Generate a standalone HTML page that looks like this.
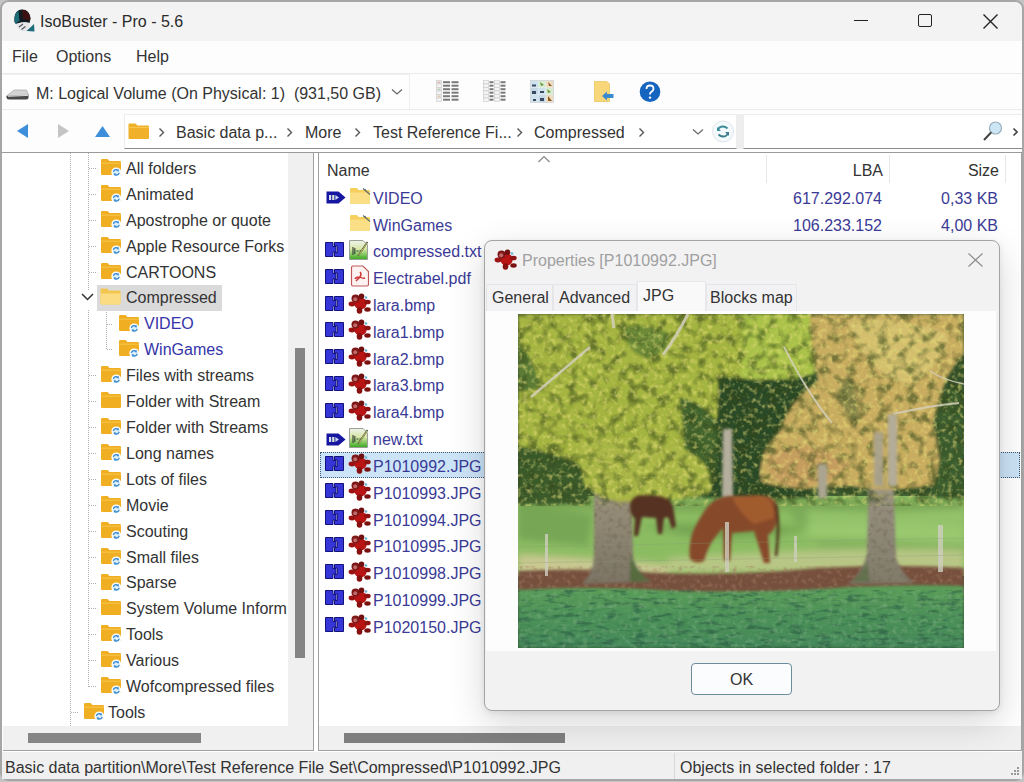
<!DOCTYPE html>
<html><head><meta charset="utf-8">
<style>
*{box-sizing:border-box}
html,body{margin:0;padding:0}
body{width:1024px;height:782px;overflow:hidden;position:relative;background:#c4c4c4;font-family:"Liberation Sans",sans-serif;font-size:16px;color:#333}
.a{position:absolute;white-space:pre}
#win{position:absolute;left:0;top:0;width:1024px;height:781px;border:2px solid #a6a6a6;border-radius:9px;background:#f0f0f0;overflow:hidden}
.t{position:absolute;white-space:pre;line-height:16px;height:16px}
.blue{color:#3a3a96}
.tb{color:#3434a8}
</style></head><body>
<div id="win"></div>
<svg width="0" height="0" style="position:absolute">
<defs>
<symbol id="fold" viewBox="0 0 22 19">
<path d="M1 2.2Q1 1 2.2 1H7.6L9.4 3H19.8Q21 3 21 4.2V15.8Q21 17 19.8 17H2.2Q1 17 1 15.8Z" fill="#f0ae22"/>
<path d="M1 5.2H21" stroke="#f5c348" stroke-width="1.2"/>
</symbol>
<symbol id="badge" viewBox="0 0 22 19">
<circle cx="16.3" cy="14.3" r="4.9" fill="#fff"/>
<circle cx="16.3" cy="14.3" r="3.7" fill="#ddf0fa"/>
<path d="M13.4 13.8Q14 11.4 16.6 11.6L18 12.3M19.2 14.8Q18.6 17.2 16 17L14.6 16.3" fill="none" stroke="#3a8ad0" stroke-width="1.3"/>
<path d="M18.6 10.8L18.8 13.4L16.4 13Z" fill="#3a8ad0"/><path d="M14 17.8L13.8 15.2L16.2 15.6Z" fill="#3a8ad0"/>
</symbol>
<symbol id="fopen" viewBox="0 0 21 17">
<path d="M0.5 1.8Q0.5 0.5 1.8 0.5H7L8.8 2.5H19.2Q20.5 2.5 20.5 3.8V15.2Q20.5 16.5 19.2 16.5H1.8Q0.5 16.5 0.5 15.2Z" fill="#f3c64e"/>
<path d="M0.5 5.5H20.5V15.2Q20.5 16.5 19.2 16.5H1.8Q0.5 16.5 0.5 15.2Z" fill="#fbdc82"/>
</symbol>
<symbol id="tag" viewBox="0 0 20 13">
<path d="M0.5 0.5H12.5L19.5 6.5L12.5 12.5H0.5Z" fill="#1616a0"/>
<rect x="3" y="4" width="2.2" height="5" fill="#d8d8f0"/><rect x="6.2" y="4" width="2.2" height="5" fill="#d8e8d0"/><path d="M9.4 4V9L13 6.5Z" fill="#c8d8f0"/>
</symbol>
<symbol id="split" viewBox="0 0 20 15">
<path d="M0.5 0.5H8V4.5H11V10H8V14.5H0.5Z" fill="#3535d8" stroke="#12127a" stroke-width="1"/>
<path d="M9.5 0.5H18.5V14.5H9.5V10.5H12.3V4H9.5Z" fill="#3535d8" stroke="#12127a" stroke-width="1"/>
</symbol>
<symbol id="flink" viewBox="0 0 22 18">
<path d="M1 2.2Q1 1 2.2 1H7.8L9.6 3H19.8Q21 3 21 4.2V15.8Q21 17 19.8 17H2.2Q1 17 1 15.8Z" fill="#f6cf5c"/>
<path d="M1 5.5H21V15.8Q21 17 19.8 17H2.2Q1 17 1 15.8Z" fill="#fadf86"/>
<path d="M14 1.5L21 7.5M16 2L17 4.5" stroke="#5a6a70" stroke-width="1.1"/>
</symbol>
<symbol id="txt" viewBox="0 0 22 22">
<defs><linearGradient id="gtx" x1="0" y1="0" x2="0" y2="1"><stop offset="0" stop-color="#eef2ea"/><stop offset="0.45" stop-color="#d8e6a8"/><stop offset="1" stop-color="#36a81e"/></linearGradient></defs>
<path d="M1.5 1.5H15L19.5 6V20.5H1.5Z" fill="url(#gtx)" stroke="#9aa098" stroke-width="1"/>
<path d="M5 8V16M6.8 9V15M8.5 12H10.5M11.5 12H13" stroke="#3a4a3a" stroke-width="1.2"/>
<path d="M10 17L19.5 3" stroke="#4a5a40" stroke-width="1.6"/><path d="M10.5 16.5L19 4" stroke="#e0d060" stroke-width="0.8"/>
</symbol>
<symbol id="pdf" viewBox="0 0 20 22">
<path d="M2 1H13L18.5 6.5V19.5Q18.5 21 17 21H3Q1.5 21 1.5 19.5V2.5Q1.5 1 3 1Z" fill="#fdf2f2" stroke="#c05a5a" stroke-width="1.2"/>
<path d="M10 7Q12 9 10 12Q7 15 6 16M10 12Q13 14 15 13M9.5 12Q6 12 5 14" fill="none" stroke="#d03838" stroke-width="1.5"/>
</symbol>
<symbol id="bear" viewBox="0 0 24 23">
<ellipse cx="12.5" cy="11.5" rx="6.2" ry="6" fill="#b81414"/>
<ellipse cx="4" cy="12" rx="3.4" ry="2.4" fill="#9a1212"/>
<ellipse cx="19.5" cy="10" rx="3.2" ry="2.3" fill="#8e1212"/>
<ellipse cx="11.5" cy="18.5" rx="2.8" ry="3.2" fill="#861010"/>
<ellipse cx="19.5" cy="17.5" rx="3.2" ry="2.2" fill="#7a1010"/>
<circle cx="7.5" cy="6.5" r="4" fill="#7e1818"/>
<circle cx="7.2" cy="7.2" r="2" fill="#c06a6a"/>
<circle cx="13.5" cy="4.2" r="2.8" fill="#701010"/>
<circle cx="18" cy="5.5" r="1.3" fill="#6ab4d4"/>
</symbol>
</defs></svg>

<!-- title bar -->
<div class="a" style="left:2px;top:2px;width:1020px;height:39px;background:#f3f3f3;border-radius:7px 7px 0 0"></div>
<div class="t" style="left:40px;top:13.5px;color:#2a2a2a">IsoBuster - Pro - 5.6</div>
<!-- window controls -->
<div class="a" style="left:854px;top:20px;width:14px;height:1.3px;background:#222"></div>
<div class="a" style="left:918px;top:14px;width:14px;height:13px;border:1.6px solid #222;border-radius:2px"></div>
<svg class="a" style="left:983px;top:14px" width="15" height="15" viewBox="0 0 15 15"><path d="M0.5 0.5L14.5 14.5M14.5 0.5L0.5 14.5" stroke="#222" stroke-width="1.4"/></svg>
<!-- menu bar -->
<div class="a" style="left:2px;top:41px;width:1020px;height:33px;background:#fdfdfd;border-bottom:1px solid #ebebeb"></div>
<div class="t" style="left:12px;top:49px">File</div>
<div class="t" style="left:56px;top:49px">Options</div>
<div class="t" style="left:136px;top:49px">Help</div>
<!-- toolbar row -->
<div class="a" style="left:2px;top:74px;width:1020px;height:40px;background:#fdfdfd"></div>
<div class="a" style="left:3px;top:74px;width:407px;height:36px;border:1px solid #efefef;border-left:none;background:#fefefe"></div>
<div class="t" style="left:36px;top:86px">M: Logical Volume (On Physical: 1)  (931,50 GB)</div>
<!-- nav row -->
<div class="a" style="left:2px;top:109px;width:1020px;height:44px;background:#fdfdfd;border-top:1px solid #ececec"></div>
<div class="a" style="left:124px;top:114px;width:613px;height:35px;background:#fff;border:1px solid #ededed;border-bottom:1.5px solid #8a8a8a"></div>
<div class="a" style="left:743px;top:114px;width:279px;height:35px;background:#fff;border:1px solid #ededed;border-bottom:1.5px solid #8a8a8a;border-right:none"></div>
<div class="a" style="left:737px;top:114px;width:6px;height:35px;background:#eeeeee"></div>
<div class="t" style="left:176px;top:125px">Basic data p...</div>
<div class="t" style="left:305px;top:125px">More</div>
<div class="t" style="left:373px;top:125px">Test Reference Fi...</div>
<div class="t" style="left:534px;top:125px">Compressed</div>
<!-- panes -->
<div class="a" style="left:2px;top:152px;width:1020px;height:600px;background:#fff;border-top:1px solid #9a9a9a"></div>
<div class="a" style="left:3px;top:153px;width:311px;height:598px;background:#fff;border-right:1px solid #a0a0a0;border-bottom:1px solid #a0a0a0"></div>
<div class="a" style="left:318px;top:153px;width:704px;height:598px;background:#fff;border-left:1px solid #a0a0a0;border-right:1px solid #a0a0a0;border-bottom:1px solid #a0a0a0"></div>
<!-- status bar -->
<div class="a" style="left:2px;top:752px;width:1020px;height:27px;background:#f0f0f0"></div>
<div class="t" style="left:5px;top:760px">Basic data partition\More\Test Reference File Set\Compressed\P1010992.JPG</div>
<div class="t" style="left:680px;top:760px">Objects in selected folder : 17</div>

<!-- title icon -->
<svg class="a" style="left:13px;top:8px" width="24" height="25" viewBox="0 0 24 25">
<path d="M1.5 14Q0.5 2 9 1.5Q17 1.5 17.5 11L16.5 15Q10 13 3 16Z" fill="#0f1c22"/>
<path d="M1.5 14Q1 5 5.5 2.8L6.5 13Q4 14 3 16Z" fill="#1d6a78"/>
<path d="M9 1.8Q16 2 17.5 10L16.5 13Q13 11 10 11Z" fill="#3c1212"/>
<path d="M3 16Q10 13 16.5 15L16 22Q12 24 8 23Q4 21 3 16Z" fill="#e6e6ea"/>
<path d="M6 19L10 16M8.5 21.5L12.5 18.5" stroke="#50585e" stroke-width="1.2"/>
<path d="M13.5 23L21 16L21.5 23.5Z" fill="#1d6e7a"/>
</svg>
<!-- drive icon -->
<svg class="a" style="left:5px;top:87px" width="25" height="16" viewBox="0 0 25 16">
<path d="M1.5 9L9 3H21.5L23.5 8Z" fill="#d4d4d4" stroke="#a8a8a8" stroke-width="0.7"/>
<path d="M1.5 9L23.5 8V10.5Q23.5 12.5 21.5 12.5H4Q1.5 12.5 1.5 10.5Z" fill="#4a4a4a"/>
<path d="M3 9.3L23 8.4" stroke="#eeeeee" stroke-width="0.9"/>
</svg>
<svg class="a" style="left:391px;top:88px" width="12" height="8" viewBox="0 0 12 8"><path d="M1 1.5L6 6L11 1.5" fill="none" stroke="#6a6a6a" stroke-width="1.3"/></svg>
<!-- toolbar icons -->
<svg class="a" style="left:436px;top:80px" width="24" height="23" viewBox="0 0 24 23">
<g fill="#f4f4f4" stroke="#c8c8c8" stroke-width="0.6"><rect x="0.5" y="0.5" width="5" height="3.4"/><rect x="0.5" y="4" width="5" height="3.4"/><rect x="0.5" y="7.5" width="5" height="3.4"/><rect x="0.5" y="11" width="5" height="3.4"/><rect x="0.5" y="14.5" width="5" height="3.4"/><rect x="0.5" y="18" width="5" height="3.4"/></g>
<g fill="#e8b0b0"><rect x="1.5" y="1.5" width="3" height="1.4"/><rect x="1.5" y="8.5" width="3" height="1.4" fill="#b0d0b0"/><rect x="1.5" y="15.5" width="3" height="1.4" fill="#e0c8a0"/></g>
<g fill="#7a7a7a"><rect x="7" y="1.2" width="7" height="2"/><rect x="15.5" y="1.2" width="7" height="2"/><rect x="7" y="4.7" width="7" height="2"/><rect x="15.5" y="4.7" width="7" height="2"/><rect x="7" y="8.2" width="7" height="2"/><rect x="15.5" y="8.2" width="7" height="2"/><rect x="7" y="11.7" width="7" height="2"/><rect x="15.5" y="11.7" width="7" height="2"/><rect x="7" y="15.2" width="7" height="2"/><rect x="15.5" y="15.2" width="7" height="2"/><rect x="7" y="18.7" width="7" height="2"/><rect x="15.5" y="18.7" width="7" height="2"/></g>
</svg>
<svg class="a" style="left:483px;top:80px" width="24" height="23" viewBox="0 0 24 23">
<g fill="#f4f4f4" stroke="#c8c8c8" stroke-width="0.6"><rect x="0.5" y="0.5" width="5" height="3.4"/><rect x="0.5" y="4" width="5" height="3.4"/><rect x="0.5" y="7.5" width="5" height="3.4"/><rect x="0.5" y="11" width="5" height="3.4"/><rect x="0.5" y="14.5" width="5" height="3.4"/><rect x="0.5" y="18" width="5" height="3.4"/><rect x="11.5" y="0.5" width="5" height="3.4"/><rect x="11.5" y="4" width="5" height="3.4"/><rect x="11.5" y="7.5" width="5" height="3.4"/><rect x="11.5" y="11" width="5" height="3.4"/><rect x="11.5" y="14.5" width="5" height="3.4"/><rect x="11.5" y="18" width="5" height="3.4"/></g>
<g fill="#7a7a7a"><rect x="6.5" y="1.2" width="4" height="2"/><rect x="17.5" y="1.2" width="5" height="2"/><rect x="6.5" y="4.7" width="4" height="2"/><rect x="17.5" y="4.7" width="5" height="2"/><rect x="6.5" y="8.2" width="4" height="2"/><rect x="17.5" y="8.2" width="5" height="2"/><rect x="6.5" y="11.7" width="4" height="2"/><rect x="17.5" y="11.7" width="5" height="2"/><rect x="6.5" y="15.2" width="4" height="2"/><rect x="17.5" y="15.2" width="5" height="2"/><rect x="6.5" y="18.7" width="4" height="2"/><rect x="17.5" y="18.7" width="5" height="2"/></g>
</svg>
<svg class="a" style="left:530px;top:80px" width="24" height="23" viewBox="0 0 24 23">
<rect x="0.5" y="0.5" width="23" height="22" fill="#e8eef2" stroke="#c0c8cc" stroke-width="0.6"/>
<rect x="1" y="1" width="7" height="6.5" fill="#cfe3ee"/><rect x="8.5" y="1" width="7" height="6.5" fill="#d8ecd0"/><rect x="16" y="1" width="7" height="6.5" fill="#f0dcc0"/>
<rect x="1" y="8" width="7" height="6.5" fill="#c4d8e8"/><rect x="8.5" y="8" width="7" height="6.5" fill="#cfe3ee"/><rect x="16" y="8" width="7" height="6.5" fill="#d8ecd0"/>
<rect x="1" y="15" width="7" height="7" fill="#cfe3ee"/><rect x="8.5" y="15" width="7" height="7" fill="#c4d8e8"/><rect x="16" y="15" width="7" height="7" fill="#f0dcc0"/>
<g fill="#3a4a60"><rect x="2" y="4.5" width="4" height="2"/><rect x="10" y="11" width="4" height="2"/><rect x="3" y="19" width="3" height="2"/><rect x="10" y="18" width="4" height="3"/><rect x="2" y="11" width="4" height="3"/></g>
<g fill="#8a5a20"><path d="M18 2L22 6H19Z"/><path d="M18 16L22 21H18Z"/></g><g fill="#6a9a40"><path d="M10 2L14 5L11 6Z"/><path d="M17 9L21 12L18 13Z"/></g>
</svg>
<svg class="a" style="left:594px;top:81px" width="21" height="22" viewBox="0 0 21 22">
<path d="M0.5 0.5H13L15.5 3V20.5H0.5Z" fill="#f7d77a" stroke="#eac660" stroke-width="0.8"/>
<path d="M8 15L13 10.5V13H19.5V17H13V19.5Z" fill="#3a8ad0"/>
</svg>
<svg class="a" style="left:639px;top:81px" width="22" height="22" viewBox="0 0 22 22">
<circle cx="11" cy="10.8" r="10.3" fill="#1565c0"/>
<path d="M7.5 8Q7.5 4.5 11 4.5Q14.5 4.5 14.5 7.8Q14.5 9.8 12.2 11Q11 11.7 11 13.5" fill="none" stroke="#fff" stroke-width="1.8"/>
<circle cx="11" cy="16.6" r="1.2" fill="#fff"/>
</svg>
<!-- nav arrows -->
<svg class="a" style="left:16px;top:123px" width="13" height="16" viewBox="0 0 13 16"><path d="M12 1V15L1 8Z" fill="#3d8fdc"/></svg>
<svg class="a" style="left:57px;top:123px" width="13" height="16" viewBox="0 0 13 16"><path d="M1 1V15L12 8Z" fill="#c4c4c4"/></svg>
<svg class="a" style="left:94px;top:125px" width="17" height="13" viewBox="0 0 17 13"><path d="M1 12H16L8.5 1Z" fill="#3d8fdc"/></svg>
<!-- address folder -->
<svg class="a" style="left:128px;top:123px" width="22" height="17" viewBox="0 0 22 17">
<path d="M0.5 1.5Q0.5 0.5 1.5 0.5H7.5L9.5 2.5H20Q21 2.5 21 3.5V15Q21 16 20 16H1.5Q0.5 16 0.5 15Z" fill="#f0b02a"/>
<path d="M0.5 4.5H21" stroke="#f7c850" stroke-width="1"/>
</svg>
<svg class="a" style="left:158px;top:127px" width="7" height="11" viewBox="0 0 7 11"><path d="M1.5 1.5L5.5 5.5L1.5 9.5" fill="none" stroke="#555" stroke-width="1.4"/></svg>
<svg class="a" style="left:286px;top:127px" width="7" height="11" viewBox="0 0 7 11"><path d="M1.5 1.5L5.5 5.5L1.5 9.5" fill="none" stroke="#555" stroke-width="1.4"/></svg>
<svg class="a" style="left:354px;top:127px" width="7" height="11" viewBox="0 0 7 11"><path d="M1.5 1.5L5.5 5.5L1.5 9.5" fill="none" stroke="#555" stroke-width="1.4"/></svg>
<svg class="a" style="left:516px;top:127px" width="7" height="11" viewBox="0 0 7 11"><path d="M1.5 1.5L5.5 5.5L1.5 9.5" fill="none" stroke="#555" stroke-width="1.4"/></svg>
<svg class="a" style="left:638px;top:127px" width="7" height="11" viewBox="0 0 7 11"><path d="M1.5 1.5L5.5 5.5L1.5 9.5" fill="none" stroke="#555" stroke-width="1.4"/></svg>
<svg class="a" style="left:692px;top:128px" width="12" height="8" viewBox="0 0 12 8"><path d="M1 1.5L6 6L11 1.5" fill="none" stroke="#6a6a6a" stroke-width="1.3"/></svg>
<!-- refresh -->
<svg class="a" style="left:711px;top:120px" width="24" height="24" viewBox="0 0 24 24">
<circle cx="12" cy="11.5" r="10.5" fill="#f4fafc" stroke="#e0e4ea" stroke-width="1"/>
<path d="M7 10Q8 6.5 12 6.5Q14.5 6.5 16.5 8.5" fill="none" stroke="#3c8c9c" stroke-width="1.8"/>
<path d="M6 7V11H10Z" fill="#3c8c9c"/>
<path d="M17 13Q16 16.5 12 16.5Q9.5 16.5 7.5 14.5" fill="none" stroke="#3c7c8c" stroke-width="1.8"/>
<path d="M18 16V12H14Z" fill="#3c7c8c"/>
</svg>
<!-- search -->
<svg class="a" style="left:981px;top:120px" width="22" height="22" viewBox="0 0 22 22">
<circle cx="14.5" cy="8" r="6" fill="#cde6f6" stroke="#9ab0c0" stroke-width="1.2"/>
<path d="M10.3 12.2L3 20" stroke="#444" stroke-width="2"/>
</svg>
<svg class="a" style="left:1012px;top:127px" width="7" height="10" viewBox="0 0 7 10"><path d="M1.5 1.5L5 5L1.5 8.5" fill="none" stroke="#444" stroke-width="1.6"/></svg>
<!-- status bar divider + grip -->
<div class="a" style="left:674px;top:753px;width:1px;height:26px;background:#d8d8d8"></div>
<svg class="a" style="left:1009px;top:766px" width="12" height="12" viewBox="0 0 12 12"><g fill="#9a9a9a"><rect x="8" y="1" width="2" height="2"/><rect x="5" y="4" width="2" height="2"/><rect x="8" y="4" width="2" height="2"/><rect x="2" y="7" width="2" height="2"/><rect x="5" y="7" width="2" height="2"/><rect x="8" y="7" width="2" height="2"/></g></svg>

<div class="a" style="left:0;top:0;width:288px;height:726px;overflow:hidden">
<div class="a" style="left:70px;top:153px;width:1px;height:573px;background:repeating-linear-gradient(#b0b0b0 0 1px,transparent 1px 2px)"></div>
<div class="a" style="left:88px;top:153px;width:1px;height:137px;background:repeating-linear-gradient(#b0b0b0 0 1px,transparent 1px 2px)"></div>
<div class="a" style="left:88px;top:310px;width:1px;height:377px;background:repeating-linear-gradient(#b0b0b0 0 1px,transparent 1px 2px)"></div>
<div class="a" style="left:106px;top:310px;width:1px;height:40px;background:repeating-linear-gradient(#b0b0b0 0 1px,transparent 1px 2px)"></div>
<div class="a" style="left:89px;top:168px;width:7px;height:1px;background:repeating-linear-gradient(90deg,#b0b0b0 0 1px,transparent 1px 2px)"></div>
<div class="a" style="left:89px;top:194px;width:7px;height:1px;background:repeating-linear-gradient(90deg,#b0b0b0 0 1px,transparent 1px 2px)"></div>
<div class="a" style="left:89px;top:220px;width:7px;height:1px;background:repeating-linear-gradient(90deg,#b0b0b0 0 1px,transparent 1px 2px)"></div>
<div class="a" style="left:89px;top:246px;width:7px;height:1px;background:repeating-linear-gradient(90deg,#b0b0b0 0 1px,transparent 1px 2px)"></div>
<div class="a" style="left:89px;top:272px;width:7px;height:1px;background:repeating-linear-gradient(90deg,#b0b0b0 0 1px,transparent 1px 2px)"></div>
<div class="a" style="left:107px;top:324px;width:6px;height:1px;background:repeating-linear-gradient(90deg,#b0b0b0 0 1px,transparent 1px 2px)"></div>
<div class="a" style="left:107px;top:349px;width:6px;height:1px;background:repeating-linear-gradient(90deg,#b0b0b0 0 1px,transparent 1px 2px)"></div>
<div class="a" style="left:89px;top:375px;width:7px;height:1px;background:repeating-linear-gradient(90deg,#b0b0b0 0 1px,transparent 1px 2px)"></div>
<div class="a" style="left:89px;top:401px;width:7px;height:1px;background:repeating-linear-gradient(90deg,#b0b0b0 0 1px,transparent 1px 2px)"></div>
<div class="a" style="left:89px;top:427px;width:7px;height:1px;background:repeating-linear-gradient(90deg,#b0b0b0 0 1px,transparent 1px 2px)"></div>
<div class="a" style="left:89px;top:453px;width:7px;height:1px;background:repeating-linear-gradient(90deg,#b0b0b0 0 1px,transparent 1px 2px)"></div>
<div class="a" style="left:89px;top:479px;width:7px;height:1px;background:repeating-linear-gradient(90deg,#b0b0b0 0 1px,transparent 1px 2px)"></div>
<div class="a" style="left:89px;top:505px;width:7px;height:1px;background:repeating-linear-gradient(90deg,#b0b0b0 0 1px,transparent 1px 2px)"></div>
<div class="a" style="left:89px;top:531px;width:7px;height:1px;background:repeating-linear-gradient(90deg,#b0b0b0 0 1px,transparent 1px 2px)"></div>
<div class="a" style="left:89px;top:557px;width:7px;height:1px;background:repeating-linear-gradient(90deg,#b0b0b0 0 1px,transparent 1px 2px)"></div>
<div class="a" style="left:89px;top:583px;width:7px;height:1px;background:repeating-linear-gradient(90deg,#b0b0b0 0 1px,transparent 1px 2px)"></div>
<div class="a" style="left:89px;top:608px;width:7px;height:1px;background:repeating-linear-gradient(90deg,#b0b0b0 0 1px,transparent 1px 2px)"></div>
<div class="a" style="left:89px;top:634px;width:7px;height:1px;background:repeating-linear-gradient(90deg,#b0b0b0 0 1px,transparent 1px 2px)"></div>
<div class="a" style="left:89px;top:660px;width:7px;height:1px;background:repeating-linear-gradient(90deg,#b0b0b0 0 1px,transparent 1px 2px)"></div>
<div class="a" style="left:89px;top:686px;width:7px;height:1px;background:repeating-linear-gradient(90deg,#b0b0b0 0 1px,transparent 1px 2px)"></div>
<div class="a" style="left:71px;top:712px;width:8px;height:1px;background:repeating-linear-gradient(90deg,#b0b0b0 0 1px,transparent 1px 2px)"></div>
<svg class="a" style="left:100px;top:158px" width="22" height="19"><use href="#fold"/><use href="#badge"/></svg>
<div class="t" style="left:126px;top:160.9px">All folders</div>
<svg class="a" style="left:100px;top:184px" width="22" height="19"><use href="#fold"/><use href="#badge"/></svg>
<div class="t" style="left:126px;top:186.8px">Animated</div>
<svg class="a" style="left:100px;top:210px" width="22" height="19"><use href="#fold"/><use href="#badge"/></svg>
<div class="t" style="left:126px;top:212.8px">Apostrophe or quote</div>
<svg class="a" style="left:100px;top:236px" width="22" height="19"><use href="#fold"/><use href="#badge"/></svg>
<div class="t" style="left:126px;top:238.6px">Apple Resource Forks</div>
<svg class="a" style="left:100px;top:262px" width="22" height="19"><use href="#fold"/><use href="#badge"/></svg>
<div class="t" style="left:126px;top:264.6px">CARTOONS</div>
<div class="a" style="left:97px;top:285px;width:125px;height:26px;background:#dadada"></div>
<svg class="a" style="left:81px;top:293px" width="13" height="8" viewBox="0 0 13 8"><path d="M1 1L6.5 6.5L12 1" fill="none" stroke="#333" stroke-width="1.5"/></svg>
<svg class="a" style="left:100px;top:288px" width="21" height="17"><use href="#fopen"/></svg>
<div class="t" style="left:126px;top:290.4px">Compressed</div>
<svg class="a" style="left:118px;top:314px" width="22" height="19"><use href="#fold"/><use href="#badge"/></svg>
<div class="t tb" style="left:144px;top:316.3px">VIDEO</div>
<svg class="a" style="left:118px;top:339px" width="22" height="19"><use href="#fold"/><use href="#badge"/></svg>
<div class="t tb" style="left:144px;top:342.2px">WinGames</div>
<svg class="a" style="left:100px;top:365px" width="22" height="19"><use href="#fold"/><use href="#badge"/></svg>
<div class="t" style="left:126px;top:368.1px">Files with streams</div>
<svg class="a" style="left:100px;top:391px" width="22" height="19"><use href="#fold"/></svg>
<div class="t" style="left:126px;top:394.1px">Folder with Stream</div>
<svg class="a" style="left:100px;top:417px" width="22" height="19"><use href="#fold"/><use href="#badge"/></svg>
<div class="t" style="left:126px;top:419.9px">Folder with Streams</div>
<svg class="a" style="left:100px;top:443px" width="22" height="19"><use href="#fold"/><use href="#badge"/></svg>
<div class="t" style="left:126px;top:445.8px">Long names</div>
<svg class="a" style="left:100px;top:469px" width="22" height="19"><use href="#fold"/><use href="#badge"/></svg>
<div class="t" style="left:126px;top:471.7px">Lots of files</div>
<svg class="a" style="left:100px;top:495px" width="22" height="19"><use href="#fold"/><use href="#badge"/></svg>
<div class="t" style="left:126px;top:497.6px">Movie</div>
<svg class="a" style="left:100px;top:521px" width="22" height="19"><use href="#fold"/><use href="#badge"/></svg>
<div class="t" style="left:126px;top:523.5px">Scouting</div>
<svg class="a" style="left:100px;top:547px" width="22" height="19"><use href="#fold"/><use href="#badge"/></svg>
<div class="t" style="left:126px;top:549.5px">Small files</div>
<svg class="a" style="left:100px;top:573px" width="22" height="19"><use href="#fold"/><use href="#badge"/></svg>
<div class="t" style="left:126px;top:575.4px">Sparse</div>
<svg class="a" style="left:100px;top:598px" width="22" height="19"><use href="#fold"/></svg>
<div class="t" style="left:126px;top:601.2px">System Volume Inform</div>
<svg class="a" style="left:100px;top:624px" width="22" height="19"><use href="#fold"/><use href="#badge"/></svg>
<div class="t" style="left:126px;top:627.2px">Tools</div>
<svg class="a" style="left:100px;top:650px" width="22" height="19"><use href="#fold"/><use href="#badge"/></svg>
<div class="t" style="left:126px;top:653.0px">Various</div>
<svg class="a" style="left:100px;top:676px" width="22" height="19"><use href="#fold"/><use href="#badge"/></svg>
<div class="t" style="left:126px;top:679.0px">Wofcompressed files</div>
<svg class="a" style="left:83px;top:702px" width="22" height="19"><use href="#fold"/><use href="#badge"/></svg>
<div class="t" style="left:108px;top:704.9px">Tools</div>
</div>
<div class="t" style="left:327px;top:163.3px">Name</div>
<svg class="a" style="left:537px;top:155px" width="14" height="8" viewBox="0 0 14 8"><path d="M1.5 7L7 1.5L12.5 7" fill="none" stroke="#8a8a8a" stroke-width="1.2"/></svg>
<div class="a" style="left:766px;top:155px;width:1px;height:28px;background:#e6e6e6"></div>
<div class="a" style="left:889px;top:155px;width:1px;height:28px;background:#e6e6e6"></div>
<div class="a" style="left:1005px;top:155px;width:1px;height:28px;background:#e6e6e6"></div>
<div class="t" style="left:783px;top:163.3px;width:100px;text-align:right">LBA</div>
<div class="t" style="left:899px;top:163.3px;width:100px;text-align:right">Size</div>
<svg class="a" style="left:326px;top:191px" width="20" height="13"><use href="#tag"/></svg>
<svg class="a" style="left:349px;top:187px" width="22" height="18"><use href="#flink"/></svg>
<div class="t blue" style="left:373px;top:190.8px">VIDEO</div>
<div class="t blue" style="left:782px;top:190.8px;width:100px;text-align:right">617.292.074</div>
<div class="t blue" style="left:898px;top:190.8px;width:100px;text-align:right">0,33 KB</div>
<svg class="a" style="left:349px;top:214px" width="22" height="18"><use href="#flink"/></svg>
<div class="t blue" style="left:373px;top:217.7px">WinGames</div>
<div class="t blue" style="left:782px;top:217.7px;width:100px;text-align:right">106.233.152</div>
<div class="t blue" style="left:898px;top:217.7px;width:100px;text-align:right">4,00 KB</div>
<svg class="a" style="left:325px;top:242px" width="20" height="15"><use href="#split"/></svg>
<svg class="a" style="left:348px;top:239px" width="22" height="22"><use href="#txt"/></svg>
<div class="t blue" style="left:373px;top:244.4px">compressed.txt</div>
<svg class="a" style="left:325px;top:269px" width="20" height="15"><use href="#split"/></svg>
<svg class="a" style="left:350px;top:265px" width="20" height="22"><use href="#pdf"/></svg>
<div class="t blue" style="left:373px;top:271.2px">Electrabel.pdf</div>
<svg class="a" style="left:325px;top:296px" width="20" height="15"><use href="#split"/></svg>
<svg class="a" style="left:348px;top:292px" width="24" height="23"><use href="#bear"/></svg>
<div class="t blue" style="left:373px;top:298.1px">lara.bmp</div>
<svg class="a" style="left:325px;top:322px" width="20" height="15"><use href="#split"/></svg>
<svg class="a" style="left:348px;top:318px" width="24" height="23"><use href="#bear"/></svg>
<div class="t blue" style="left:373px;top:324.8px">lara1.bmp</div>
<svg class="a" style="left:325px;top:349px" width="20" height="15"><use href="#split"/></svg>
<svg class="a" style="left:348px;top:345px" width="24" height="23"><use href="#bear"/></svg>
<div class="t blue" style="left:373px;top:351.7px">lara2.bmp</div>
<svg class="a" style="left:325px;top:376px" width="20" height="15"><use href="#split"/></svg>
<svg class="a" style="left:348px;top:372px" width="24" height="23"><use href="#bear"/></svg>
<div class="t blue" style="left:373px;top:378.4px">lara3.bmp</div>
<svg class="a" style="left:325px;top:403px" width="20" height="15"><use href="#split"/></svg>
<svg class="a" style="left:348px;top:399px" width="24" height="23"><use href="#bear"/></svg>
<div class="t blue" style="left:373px;top:405.2px">lara4.bmp</div>
<svg class="a" style="left:326px;top:433px" width="20" height="13"><use href="#tag"/></svg>
<svg class="a" style="left:348px;top:427px" width="22" height="22"><use href="#txt"/></svg>
<div class="t blue" style="left:373px;top:432.1px">new.txt</div>
<div class="a" style="left:320px;top:452px;width:700px;height:26px;background:#cce4f7;border:1px dotted #3c5a78"></div>
<svg class="a" style="left:325px;top:456px" width="20" height="15"><use href="#split"/></svg>
<svg class="a" style="left:348px;top:452px" width="24" height="23"><use href="#bear"/></svg>
<div class="t blue" style="left:373px;top:458.8px">P1010992.JPG</div>
<svg class="a" style="left:325px;top:483px" width="20" height="15"><use href="#split"/></svg>
<svg class="a" style="left:348px;top:479px" width="24" height="23"><use href="#bear"/></svg>
<div class="t blue" style="left:373px;top:485.7px">P1010993.JPG</div>
<svg class="a" style="left:325px;top:510px" width="20" height="15"><use href="#split"/></svg>
<svg class="a" style="left:348px;top:506px" width="24" height="23"><use href="#bear"/></svg>
<div class="t blue" style="left:373px;top:512.5px">P1010994.JPG</div>
<svg class="a" style="left:325px;top:537px" width="20" height="15"><use href="#split"/></svg>
<svg class="a" style="left:348px;top:533px" width="24" height="23"><use href="#bear"/></svg>
<div class="t blue" style="left:373px;top:539.3px">P1010995.JPG</div>
<svg class="a" style="left:325px;top:564px" width="20" height="15"><use href="#split"/></svg>
<svg class="a" style="left:348px;top:560px" width="24" height="23"><use href="#bear"/></svg>
<div class="t blue" style="left:373px;top:566.1px">P1010998.JPG</div>
<svg class="a" style="left:325px;top:590px" width="20" height="15"><use href="#split"/></svg>
<svg class="a" style="left:348px;top:586px" width="24" height="23"><use href="#bear"/></svg>
<div class="t blue" style="left:373px;top:592.9px">P1010999.JPG</div>
<svg class="a" style="left:325px;top:617px" width="20" height="15"><use href="#split"/></svg>
<svg class="a" style="left:348px;top:613px" width="24" height="23"><use href="#bear"/></svg>
<div class="t blue" style="left:373px;top:619.7px">P1020150.JPG</div>
<div class="a" style="left:288px;top:153px;width:25px;height:597px;background:#f0f0f0"></div>
<div class="a" style="left:295px;top:348px;width:10px;height:310px;background:#858585"></div>
<div class="a" style="left:3px;top:726px;width:310px;height:24px;background:#f0f0f0"></div>
<div class="a" style="left:28px;top:733px;width:173px;height:10px;background:#858585"></div>
<div class="a" style="left:319px;top:726px;width:702px;height:24px;background:#f0f0f0"></div>
<div class="a" style="left:344px;top:733px;width:221px;height:10px;background:#7f7f7f"></div>
<!-- dialog -->
<div class="a" style="left:484px;top:239.5px;width:515.5px;height:471.5px;border:1px solid #a4a4a4;border-radius:8px;background:#f2f2f3;box-shadow:0 12px 36px rgba(0,0,0,0.16),0 2px 6px rgba(0,0,0,0.08)"></div>
<svg class="a" style="left:494px;top:248px" width="24" height="23"><use href="#bear"/></svg>
<div class="t" style="left:522px;top:252.5px;color:#a0a0a0">Properties [P1010992.JPG]</div>
<svg class="a" style="left:968px;top:252.5px" width="15" height="14" viewBox="0 0 15 14"><path d="M0.5 0.5L14.5 13.5M14.5 0.5L0.5 13.5" stroke="#8c8c8c" stroke-width="1.2"/></svg>
<!-- tabs -->
<div class="a" style="left:486px;top:284px;width:67px;height:27px;background:#f2f2f4;border:1px solid #e6e6e8;border-bottom:none"></div>
<div class="a" style="left:553px;top:284px;width:84px;height:27px;background:#f2f2f4;border:1px solid #e6e6e8;border-bottom:none"></div>
<div class="a" style="left:706px;top:284px;width:91px;height:27px;background:#f2f2f4;border:1px solid #e6e6e8;border-bottom:none"></div>
<div class="a" style="left:636.5px;top:281px;width:69px;height:31px;background:#f9f9fa;border:1px solid #e8e8ea;border-bottom:none"></div>
<div class="t" style="left:492px;top:290px">General</div>
<div class="t" style="left:559px;top:290px">Advanced</div>
<div class="t" style="left:643px;top:288px">JPG</div>
<div class="t" style="left:710px;top:289.5px">Blocks map</div>
<!-- tab page -->
<div class="a" style="left:486px;top:311px;width:510px;height:340px;background:#fdfdfd"></div>
<!-- OK button -->
<div class="a" style="left:691px;top:662.5px;width:101px;height:32px;border:1px solid #6a8e9c;border-radius:4px;background:#fafcfd"></div>
<div class="t" style="left:691px;top:672px;width:101px;text-align:center">OK</div>

<svg class="a" style="left:518px;top:314px" width="446" height="334" viewBox="0 0 446 334">
<defs>
<filter id="bl1" x="-20%" y="-20%" width="140%" height="140%"><feGaussianBlur stdDeviation="1.6"/></filter>
<filter id="bl3" x="-30%" y="-30%" width="160%" height="160%"><feGaussianBlur stdDeviation="3.5"/></filter>
<filter id="mot" x="0" y="0" width="100%" height="100%">
<feTurbulence type="fractalNoise" baseFrequency="0.1" numOctaves="3" seed="7" result="n"/>
<feGaussianBlur in="n" stdDeviation="0.8" result="nb"/><feColorMatrix in="nb" type="matrix" values="0 0 0 0 0  0 0 0 0 0  0 0 0 0 0  4 0 0 0 -1.85" result="a"/>
<feComposite in="SourceGraphic" in2="a" operator="in"/>
</filter>
<filter id="mot2" x="0" y="0" width="100%" height="100%">
<feTurbulence type="fractalNoise" baseFrequency="0.2" numOctaves="2" seed="21" result="n"/>
<feGaussianBlur in="n" stdDeviation="0.6" result="nb"/><feColorMatrix in="nb" type="matrix" values="0 0 0 0 0  0 0 0 0 0  0 0 0 0 0  0 3 0 0 -1.45" result="a"/>
<feComposite in="SourceGraphic" in2="a" operator="in"/>
</filter>
<filter id="mot3" x="0" y="0" width="100%" height="100%">
<feTurbulence type="fractalNoise" baseFrequency="0.07 0.25" numOctaves="2" seed="5" result="n"/>
<feColorMatrix in="n" type="matrix" values="0 0 0 0 0  0 0 0 0 0  0 0 0 0 0  0 0 4 0 -2.0" result="a"/>
<feComposite in="SourceGraphic" in2="a" operator="in"/>
</filter>
<linearGradient id="fg" x1="0" y1="0" x2="0" y2="1"><stop offset="0" stop-color="#5c9e58"/><stop offset="0.5" stop-color="#4c9058"/><stop offset="1" stop-color="#44885a"/></linearGradient>
<linearGradient id="tr1" x1="0" y1="0" x2="0" y2="1"><stop offset="0" stop-color="#aaa48c"/><stop offset="0.35" stop-color="#958d78"/><stop offset="1" stop-color="#7c7464"/></linearGradient>
<linearGradient id="tr2" x1="0" y1="0" x2="0" y2="1"><stop offset="0" stop-color="#b0aa94"/><stop offset="0.3" stop-color="#968f7e"/><stop offset="1" stop-color="#807a6a"/></linearGradient>
<clipPath id="trc"><path d="M76 186 Q94 182 113 186 L115 244 Q120 260 134 268 L64 270 Q76 258 76 242Z"/><path d="M351 160 Q363 157 375 160 L378 244 Q384 260 396 269 L330 270 Q345 258 349 240Z"/></clipPath>
</defs>
<rect width="446" height="334" fill="#34502a"/>
<!-- field -->
<rect x="0" y="182" width="446" height="80" fill="#8cbc62"/>
<g filter="url(#bl3)">
<path d="M0 184 H446 V196 Q300 192 200 198 Q100 196 0 194Z" fill="#7aa654"/>
<path d="M120 212 Q200 206 290 214 Q260 226 180 224Z" fill="#6c9c4c" opacity="0.7"/>
<path d="M270 196 Q360 190 446 200 V214 Q360 208 280 212Z" fill="#72a452" opacity="0.6"/>
<path d="M300 226 Q380 222 446 226 V236 Q370 234 300 236Z" fill="#7aaa56" opacity="0.5"/>
<path d="M0 240 Q80 244 150 250 L150 262 L0 262Z" fill="#c8c890"/>
<path d="M150 244 Q330 232 446 236 V258 H150Z" fill="#bcc888" opacity="0.9"/>
<path d="M0 190 Q40 196 75 200 L70 232 Q30 228 0 226Z" fill="#6e9e50" opacity="0.7"/>
<path d="M290 196 Q360 200 446 196 V230 Q360 226 290 222Z" fill="#a4d078" opacity="0.6"/>
</g>
<!-- litter band -->
<path d="M0 257 Q70 253 140 259 Q220 262 300 254 Q380 250 446 254 V282 H0Z" fill="#76503e" filter="url(#bl1)"/>
<rect x="0" y="252" width="446" height="30" fill="#a07a62" filter="url(#mot2)" opacity="0.55"/>
<!-- foreground grass -->
<path d="M0 276 Q80 271 160 277 Q260 279 330 273 Q400 270 446 272 V334 H0Z" fill="url(#fg)" filter="url(#bl1)"/>
<rect x="0" y="276" width="446" height="58" fill="#2a5c44" filter="url(#mot3)" opacity="0.6"/>
<rect x="0" y="276" width="446" height="58" fill="#88b488" filter="url(#mot2)" opacity="0.4"/>
<!-- main trunks -->
<g filter="url(#bl1)">
<path d="M76 150 Q94 146 113 150 L115 244 Q120 260 134 268 L64 270 Q76 258 76 242Z" fill="url(#tr1)"/>
<path d="M112 240 Q118 258 132 267 L112 268Z" fill="#4a6a34" opacity="0.8"/>
<path d="M351 150 Q363 147 375 150 L378 244 Q384 260 396 269 L330 270 Q345 258 349 240Z" fill="url(#tr2)"/>
<path d="M333 268 Q345 258 349 246 L352 268Z" fill="#4e6a3a" opacity="0.6"/>
</g>
<!-- woods/canopy -->
<g filter="url(#bl1)">
<path d="M0 0 H300 L296 60 Q260 70 240 62 Q210 70 196 110 Q205 140 196 170 Q180 186 150 186 Q120 190 96 184 Q80 180 60 150 Q30 136 0 132Z" fill="#a4b440"/>
<path d="M0 30 Q14 40 22 72 Q10 80 0 76Z" fill="#5a7a34"/>
<path d="M105 13 Q130 8 152 20 Q150 40 130 44 Q108 40 105 13Z" fill="#5e8034" opacity="0.8"/>
<path d="M0 132 Q40 140 66 158 L72 190 H0Z" fill="#3a5a2c"/>
<path d="M200 62 Q230 66 262 64 Q292 70 296 110 Q300 150 290 184 L186 184 Q200 150 200 62Z" fill="#2c4826"/>
<path d="M161 83 Q190 90 200 110 Q204 150 190 184 L160 184 Q172 150 161 83Z" fill="#385a2c" opacity="0.9"/>
<path d="M60 128 Q110 118 160 132 Q200 150 192 178 Q150 190 110 188 Q84 188 66 170Z" fill="#a8b644"/>
<path d="M292 0 H446 V40 Q425 60 415 110 Q425 150 419 170 Q380 180 330 172 Q280 178 244 168 Q238 140 262 118 Q270 90 300 66 Q292 30 292 0Z" fill="#c8ac60"/>
<path d="M330 8 Q380 0 430 20 Q420 60 390 70 Q350 62 330 8Z" fill="#d6c472" opacity="0.8"/>
<path d="M250 140 Q290 120 330 150 Q320 172 270 172 Q246 162 250 140Z" fill="#c49c5e" opacity="0.9"/>
<path d="M330 60 Q345 90 340 110 Q325 100 318 80Z" fill="#5a6a3a" opacity="0.6"/>
<path d="M424 80 Q436 70 446 72 V184 H410 Q426 150 420 120 Q416 96 424 80Z" fill="#3a5c2e"/>
<path d="M223 0 H292 Q292 30 296 60 Q260 68 223 64Z" fill="#aac248"/>
</g>
<rect x="0" y="0" width="446" height="192" fill="#34461a" filter="url(#mot)" opacity="0.55"/>
<rect x="0" y="0" width="446" height="192" fill="#e8e07c" filter="url(#mot2)" opacity="0.55"/>
<!-- branches -->
<g stroke="#d4d0bc" fill="none" opacity="0.85">
<path d="M13 83 Q40 60 72 33" stroke-width="2.5"/>
<path d="M94 0 L96 14" stroke-width="3"/>
<path d="M170 0 Q160 20 145 41" stroke-width="3"/>
<path d="M266 33 Q290 80 314 109" stroke-width="1.8"/>
<path d="M375 100 Q410 92 441 89" stroke-width="2"/>
<path d="M412 57 Q425 66 446 70" stroke-width="1.5"/>
</g>
<g clip-path="url(#trc)"><rect x="60" y="150" width="340" height="120" fill="#6a6050" filter="url(#mot2)" opacity="0.4"/></g>
<!-- background trunks -->
<g filter="url(#bl1)">
<path d="M205 115 H214 L215 184 H204Z" fill="#b4ae9c"/>
<path d="M300 150 H309 V184 H300Z" fill="#aaa490"/>
<path d="M370 100 H379 V172 H370Z" fill="#b2ac98"/>
<path d="M356 118 H365 V172 H356Z" fill="#a8a290" opacity="0.9"/>
</g>
<!-- horses -->
<g filter="url(#bl1)">
<path d="M112 190 Q114 181 125 181 L142 182 Q152 184 155 192 L158 212 L154 215 L150 203 L146 204 L144 220 L140 220 L138 204 L124 203 L120 222 L116 222 L117 205 Q111 200 112 190Z" fill="#553222"/>
<path d="M259 192 Q257 181 240 181 L212 182 Q198 183 190 192 Q180 205 174 220 Q170 235 172 245 Q178 251 186 247 Q190 232 198 222 L205 214 L206 247 L212 247 L214 219 L236 217 L246 249 L252 249 L250 221 Q259 215 259 204Z" fill="#86482a"/>
<path d="M214 183 L246 182 Q256 186 256 204 L236 210 Q222 200 214 183Z" fill="#a8622e" opacity="0.8"/>
<path d="M258 190 Q262 210 258 242" stroke="#4a2a18" stroke-width="2.5" fill="none"/>
</g>
<!-- fence -->
<g fill="#cfcfc0" opacity="0.8">
<rect x="27" y="220" width="3" height="42"/><rect x="207" y="208" width="4" height="50"/><rect x="276" y="222" width="3" height="26"/><rect x="420" y="211" width="5" height="47"/>
</g>
<path d="M0 233 L446 224 M0 249 L446 241" stroke="#8a9a78" stroke-width="0.6" opacity="0.5"/>
</svg>

</body></html>
